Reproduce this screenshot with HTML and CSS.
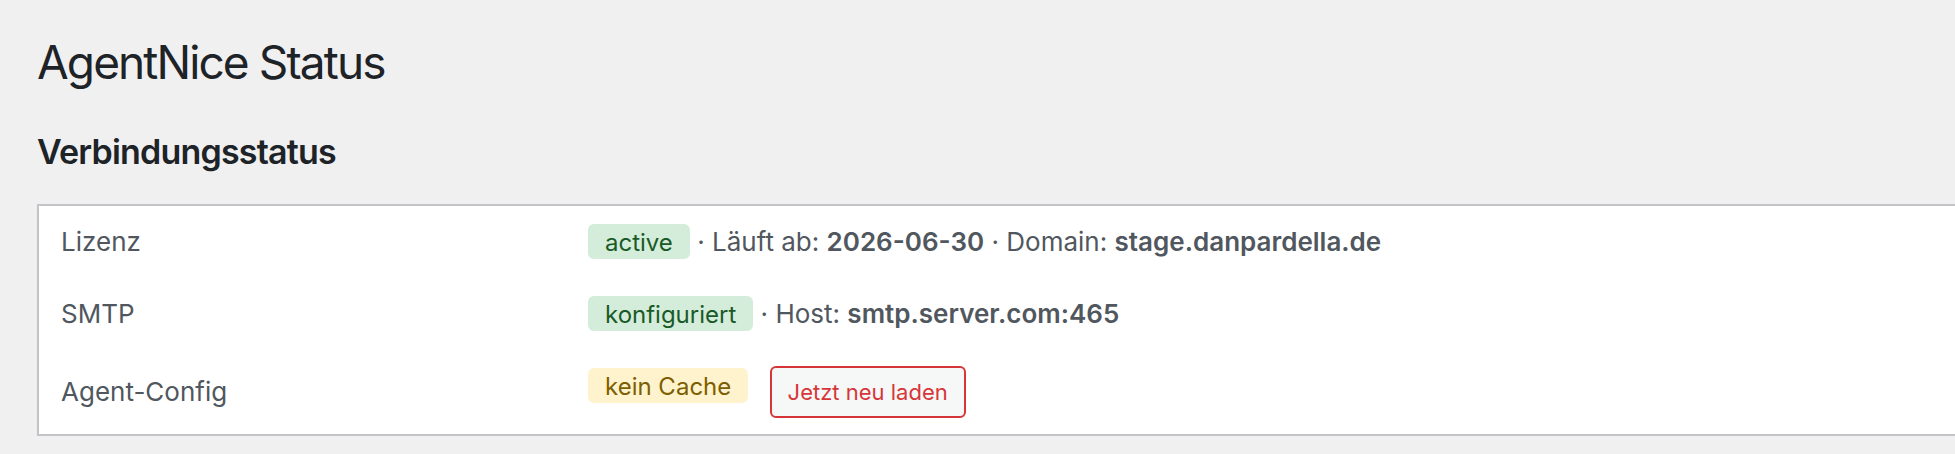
FILE: index.html
```html
<!DOCTYPE html>
<html lang="de">
<head>
<meta charset="utf-8">
<title>AgentNice Status</title>
<link rel="stylesheet" href="styles.css">
</head>
<body>
<div class="wrap">
  <h1 class="page-title">AgentNice Status</h1>
  <h2 class="section-title">Verbindungsstatus</h2>
  <table class="status-table">
    <tbody>
      <tr>
        <th>Lizenz</th>
        <td><span class="badge badge-ok">active</span> · Läuft ab: <strong>2026-06-30</strong> · Domain: <strong>stage.danpardella.de</strong></td>
      </tr>
      <tr>
        <th>SMTP</th>
        <td><span class="badge badge-ok">konfiguriert</span> · Host: <strong>smtp.server.com:465</strong></td>
      </tr>
      <tr>
        <th>Agent-Config</th>
        <td><span class="badge badge-warn">kein Cache</span> <button class="button-delete" type="button">Jetzt neu laden</button></td>
      </tr>
    </tbody>
  </table>
</div>
</body>
</html>
```
FILE: styles.css
```css
html, body {
  margin: 0;
  padding: 0;
  overflow: hidden;
}

body {
  background: #f0f0f1;
  color: #3c434a;
  font-family: Inter, "Noto Sans", "Liberation Sans", sans-serif;
}

.wrap {
  padding-left: 37px;
}

.page-title {
  margin: 0;
  padding-top: 32px;
  font-size: 46px;
  line-height: 60px;
  font-weight: 400;
  letter-spacing: -1.9px;
  color: #1d2327;
}

.section-title {
  margin: 38px 0 0;
  font-size: 34px;
  line-height: 44px;
  font-weight: 600;
  letter-spacing: -0.8px;
  color: #1d2327;
}

.status-table {
  margin-top: 30px;
  width: 2120px;
  border: 2px solid #c3c4c7;
  border-spacing: 0;
  border-collapse: separate;
  background: #fff;
  box-shadow: 0 2px 2px rgba(0, 0, 0, 0.04);
}

.status-table th,
.status-table td {
  padding: 16px 20px;
  font-size: 26px;
  line-height: 40px;
  color: #50575e;
  text-align: left;
}

.status-table th {
  width: 487px;
  padding-left: 22px;
  font-weight: 400;
  vertical-align: middle;
}

.status-table td {
  vertical-align: middle;
  white-space: nowrap;
}

.status-table strong {
  font-weight: 600;
}

.badge {
  display: inline-block;
  padding: 7px 17px 4px;
  font-size: 24px;
  line-height: 24px;
  border-radius: 6px;
}

.badge-ok {
  background: #d4edda;
  color: #1a5a28;
}

.badge-warn {
  background: #fff3cd;
  color: #7d5e00;
}

.button-delete {
  display: inline-block;
  vertical-align: top;
  margin: 0 0 0 14px;
  padding: 0 16px;
  height: 52px;
  font-family: inherit;
  font-size: 22px;
  line-height: 48px;
  color: #d63638;
  background: #f6f7f7;
  border: 2px solid #d63638;
  border-radius: 6px;
  cursor: pointer;
}
```
